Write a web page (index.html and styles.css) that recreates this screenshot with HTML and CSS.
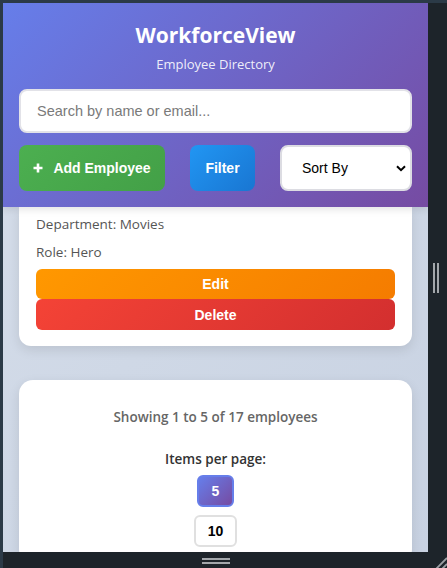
FILE: index.html
```html
<!DOCTYPE html>
<html lang="en">
<head>
<meta charset="utf-8">
<title>WorkforceView</title>
<link rel="stylesheet" href="styles.css">
</head>
<body>
<div class="frame">
  <div class="viewport">
    <header class="header">
      <h1 class="title">WorkforceView</h1>
      <p class="subtitle">Employee Directory</p>
      <input class="search" type="text" placeholder="Search by name or email...">
      <div class="controls">
        <button class="btn btn-add"><svg class="plus" width="10" height="10" viewBox="0 0 10 10"><path d="M5 0.5V9.5M0.5 5H9.5" stroke="#fff" stroke-width="2.6"/></svg><span>Add Employee</span></button>
        <button class="btn btn-filter">Filter</button>
        <div class="sort"><span>Sort By</span><svg width="10" height="7" viewBox="0 0 10 7"><path d="M1 1.2L5 5.2L9 1.2" fill="none" stroke="#000" stroke-width="2"/></svg></div>
      </div>
    </header>
    <main class="content">
      <section class="card employee">
        <p class="info">Department: Movies</p>
        <p class="info">Role: Hero</p>
        <div class="actions">
          <button class="act act-edit">Edit</button>
          <button class="act act-delete">Delete</button>
        </div>
      </section>
      <section class="card pager">
        <p class="showing">Showing 1 to 5 of 17 employees</p>
        <p class="per-label">Items per page:</p>
        <div class="per-options">
          <button class="per per-active">5</button>
          <button class="per">10</button>
        </div>
      </section>
    </main>
  </div>
  <div class="side-handle"><span></span><span></span></div>
  <div class="bottom-handle"><span></span><span></span></div>
  <div class="corner"><svg width="16" height="16" viewBox="0 0 16 16"><path d="M3 16L16 3M9 16L16 9" stroke="#9a9fa4" stroke-width="1.8"/></svg></div>
</div>
</body>
</html>
```

FILE: styles.css
```css
* { box-sizing: border-box; }

html, body {
  margin: 0;
  padding: 0;
}

body {
  width: 447px;
  height: 568px;
  overflow: hidden;
  background: #2b3a47;
  font-family: "Open Sans", "Noto Sans", sans-serif;
}

.frame {
  margin: 3px 0 0 3px;
  width: 444px;
  height: 565px;
  background: #1d242a;
  display: grid;
  grid-template-columns: 425px 19px;
  grid-template-rows: 549px 16px;
}

.viewport {
  grid-column: 1;
  grid-row: 1;
  overflow: hidden;
  background: linear-gradient(135deg, #d6deea 0%, #c8d2e2 100%);
  display: flex;
  flex-direction: column;
}

/* header */
.header {
  position: relative;
  z-index: 2;
  flex: none;
  height: 204px;
  padding: 18px 16px 16px;
  background: linear-gradient(135deg, #667eea 0%, #764ba2 100%);
  box-shadow: 0 2px 8px rgba(0, 0, 0, 0.12);
  display: flex;
  flex-direction: column;
  align-items: stretch;
}

.title {
  margin: 0;
  font-size: 21px;
  line-height: 28px;
  font-weight: 700;
  color: #fff;
  text-align: center;
}

.subtitle {
  margin: 6px 0 0;
  font-size: 13px;
  line-height: 18px;
  color: rgba(255, 255, 255, 0.9);
  text-align: center;
}

.search {
  margin-top: 16px;
  height: 44px;
  width: 100%;
  border: 2px solid #e2e2e8;
  border-radius: 8px;
  padding: 0 16px;
  font-family: "Liberation Sans", Arial, sans-serif;
  font-size: 14.5px;
  background: #fff;
  outline: none;
}

.search::placeholder {
  color: #7a7a7a;
}

.controls {
  margin-top: 12px;
  display: flex;
  justify-content: space-between;
  align-items: stretch;
  height: 46px;
}

.btn {
  border: none;
  border-radius: 8px;
  padding: 0 12px;
  font-family: "Liberation Sans", Arial, sans-serif;
  font-size: 14px;
  font-weight: 700;
  color: #fff;
  white-space: nowrap;
  display: flex;
  align-items: center;
  justify-content: center;
}

.btn-add {
  width: 146px;
  background: linear-gradient(135deg, #4caf50 0%, #43a047 100%);
  gap: 10px;
}

.plus { flex: none; }

.btn-filter {
  width: 65px;
  background: linear-gradient(135deg, #2196f3 0%, #1976d2 100%);
}

.sort {
  width: 132px;
  background: #fff;
  border: 2px solid #dcdce2;
  border-radius: 8px;
  padding: 0 4px 0 20px;
  display: flex;
  align-items: center;
  justify-content: space-between;
  font-family: "Liberation Sans", Arial, sans-serif;
  font-size: 14px;
  color: #000;
}

/* content */
.content {
  flex: 1;
  padding: 0 16px;
  display: flex;
  flex-direction: column;
}

.card {
  background: #fff;
  border-radius: 14px;
  box-shadow: 0 4px 12px rgba(0, 0, 0, 0.1);
}

.employee {
  border-radius: 0 0 12px 12px;
  padding: 7px 17px 16px;
}

.info {
  margin: 0 0 8px;
  font-size: 13.5px;
  line-height: 20px;
  color: #555;
}

.actions {
  margin-top: -1px;
  display: flex;
  flex-direction: column;
}

.act {
  border: none;
  border-radius: 6px;
  height: 31px;
  font-family: "Liberation Sans", Arial, sans-serif;
  font-size: 14px;
  font-weight: 700;
  color: #fff;
}

.act-edit {
  height: 30px;
  background: linear-gradient(135deg, #ff9800 0%, #f57c00 100%);
}

.act-delete {
  background: linear-gradient(135deg, #f44336 0%, #d32f2f 100%);
}

.pager {
  margin-top: 34px;
  padding: 26px 16px 16px;
  display: flex;
  flex-direction: column;
  align-items: center;
  flex: none;
}

.showing {
  margin: 0;
  font-size: 13.5px;
  line-height: 22px;
  font-weight: 600;
  color: #666;
}

.per-label {
  margin: 21px 0 0;
  font-size: 13.5px;
  line-height: 20px;
  font-weight: 600;
  color: #333;
}

.per-options {
  margin-top: 6px;
  display: flex;
  flex-direction: column;
  align-items: center;
  gap: 8px;
}

.per {
  height: 32px;
  min-width: 37px;
  padding: 0 12px;
  border: 2px solid #e0e0e0;
  border-radius: 6px;
  background: #fff;
  font-family: "Liberation Sans", Arial, sans-serif;
  font-size: 14px;
  font-weight: 700;
  color: #000;
}

.per-active {
  border-color: #667eea;
  background: linear-gradient(135deg, #667eea 0%, #764ba2 100%);
  color: #fff;
}

/* device frame handles */
.side-handle {
  grid-column: 2;
  grid-row: 1;
  display: flex;
  justify-content: center;
  align-items: center;
  gap: 2px;
  padding-right: 4px;
}

.side-handle span {
  width: 2px;
  height: 30px;
  background: #a3a7ab;
}

.bottom-handle {
  grid-column: 1;
  grid-row: 2;
  display: flex;
  flex-direction: column;
  align-items: center;
  justify-content: center;
  gap: 2px;
  padding-top: 2px;
}

.bottom-handle span {
  width: 28px;
  height: 2px;
  background: #a3a7ab;
}

.corner {
  grid-column: 2;
  grid-row: 2;
  display: flex;
  align-items: flex-end;
  justify-content: flex-end;
  overflow: hidden;
}

.corner svg { display: block; margin-bottom: -3px; }
```
